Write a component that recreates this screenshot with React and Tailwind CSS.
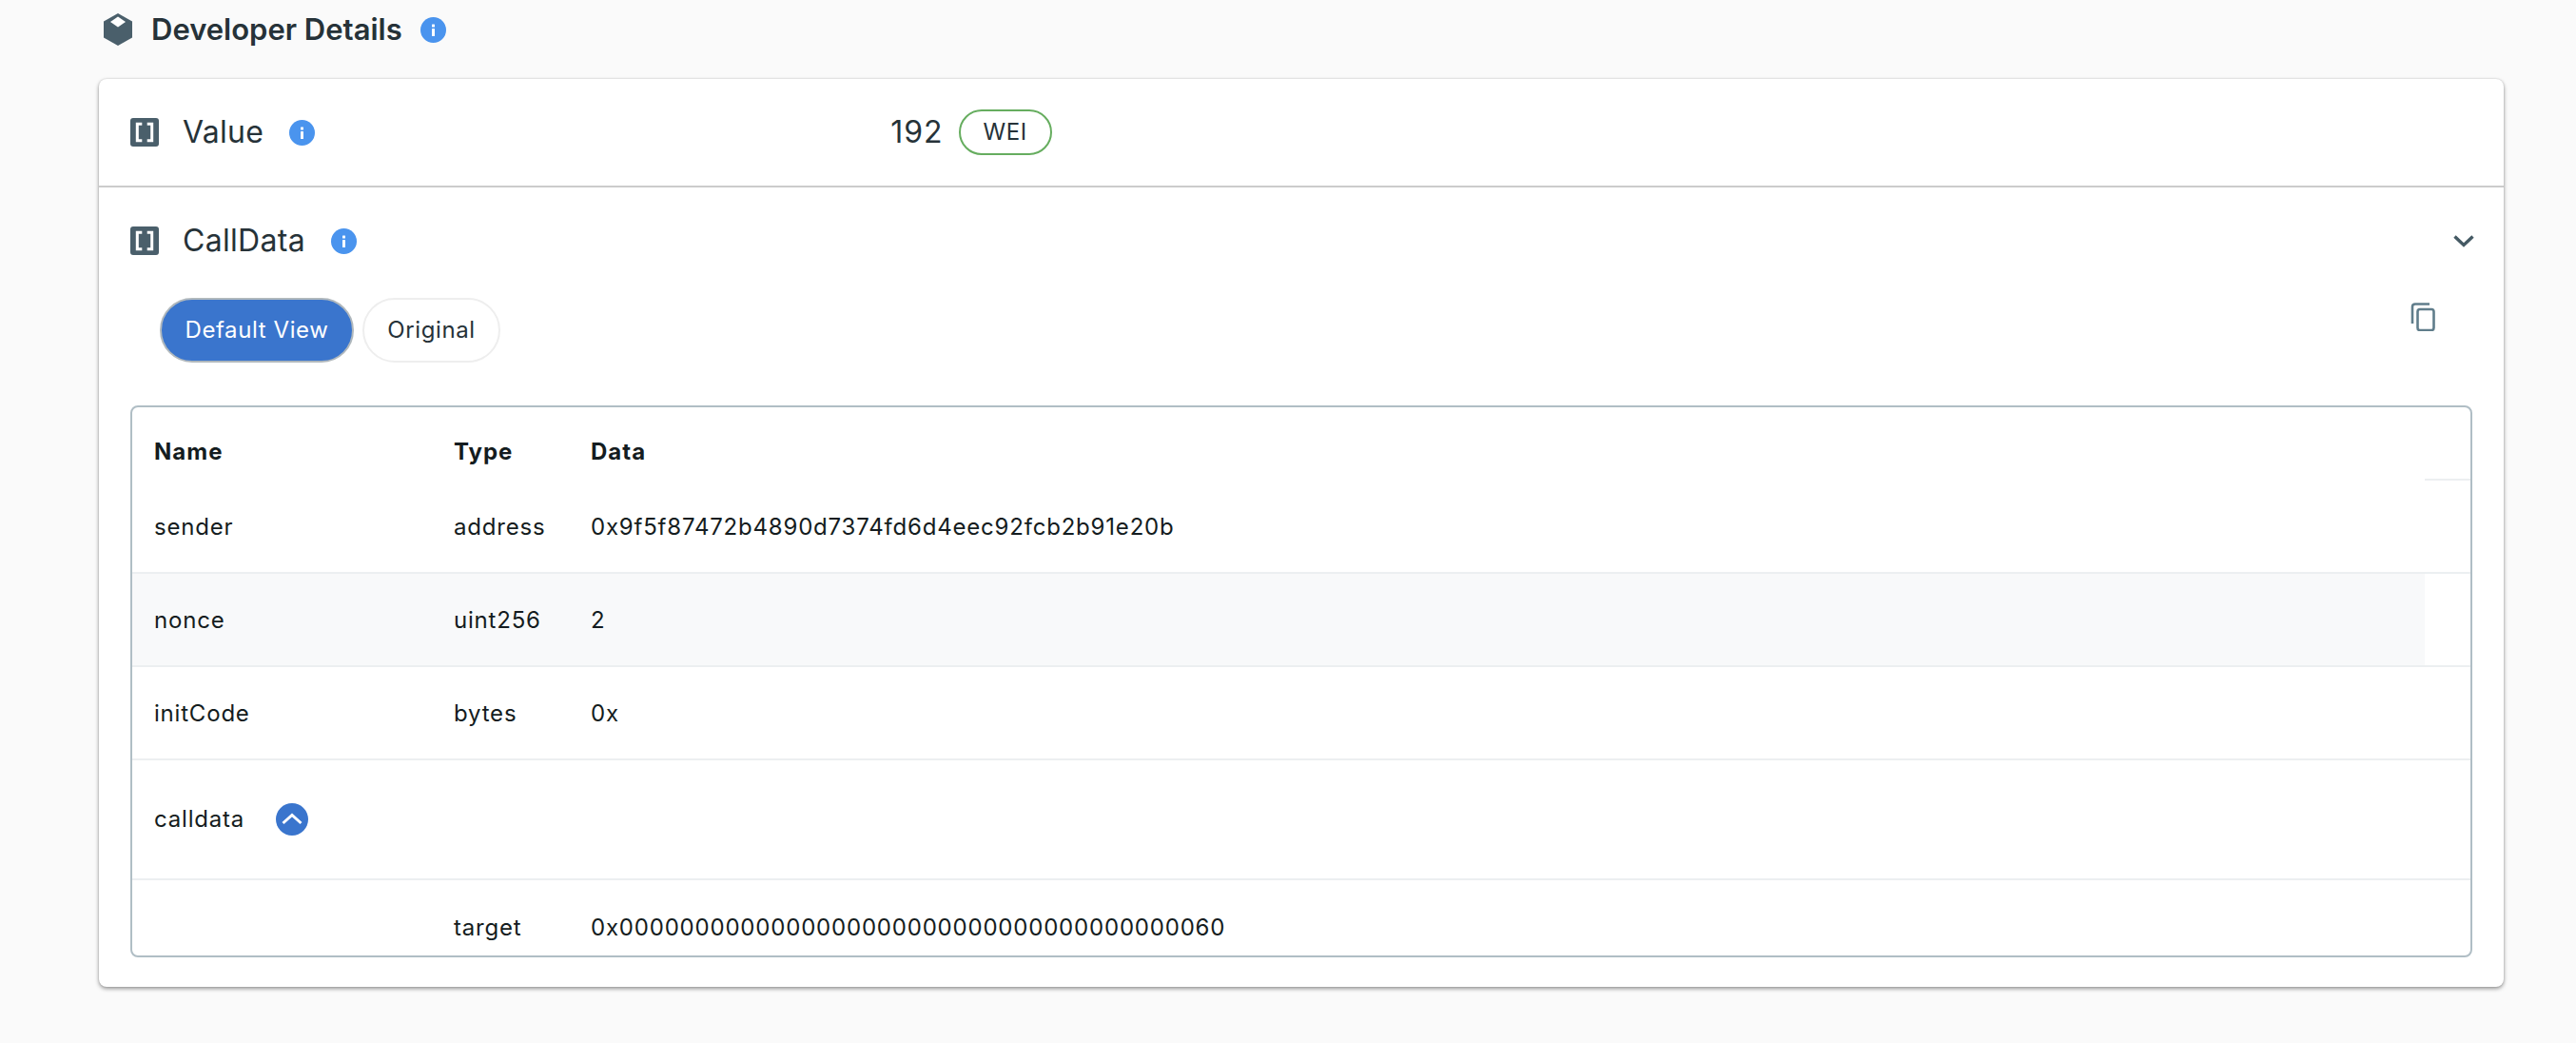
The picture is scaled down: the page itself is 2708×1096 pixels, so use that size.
const font = { fontFamily: 'Inter, "Noto Sans", sans-serif' }

function InfoDot() {
  return (
    <svg width="27" height="27" viewBox="0 0 27 27" className="shrink-0">
      <circle cx="13.5" cy="13.5" r="13.5" fill="#4a94ee" />
      <rect x="12" y="12" width="3" height="8" rx="0.5" fill="#fff" />
      <rect x="12" y="7.5" width="3" height="3" rx="0.5" fill="#fff" />
    </svg>
  )
}

function BracketIcon() {
  return (
    <svg width="30" height="30" viewBox="0 0 30 30" className="shrink-0">
      <rect width="30" height="30" rx="3" fill="#4a5f6b" />
      <path d="M12.300 6.200H7.300v17.600h5M17.700 6.200h5v17.600h-5" fill="none" stroke="#fff" strokeWidth="3" />
    </svg>
  )
}

function CubeIcon() {
  return (
    <svg width="30" height="34" viewBox="0 0 30 34" className="shrink-0">
      <path d="M15 0 30 8.5v17L15 34 0 25.5v-17Z" fill="#4a5f6b" />
      <path d="M15 3.500 23 9 15 14.500 7 9Z" fill="#fff" />
    </svg>
  )
}

function Row({ name, type, data, shaded, last }) {
  return (
    <div className={`${last ? '' : 'border-b-2 border-[#eceff1]'} h-[98px] pr-[48px]`}>
      <div className={`grid h-full grid-cols-[315px_144px_1fr] items-center pt-[2px] pl-[23px] text-[24px] tracking-[0.8px] text-[#141c20] ${shaded ? 'bg-[#f8f9fa]' : ''}`}>
        <span>{name}</span>
        <span>{type}</span>
        <span>{data}</span>
      </div>
    </div>
  )
}

export default function App() {
  return (
    <div className="h-[1096px] w-[2708px] overflow-hidden bg-[#fafafa] pr-[76px] pl-[104px]" style={font}>
      <div className="flex h-[83px] items-start">
        <div className="mt-[8px] flex items-center">
          <span className="mr-[20px] ml-[5px]"><CubeIcon /></span>
          <h2 className="mr-[19px] text-[31px] font-semibold text-[#263238]">Developer Details</h2>
          <InfoDot />
        </div>
      </div>

      <div className="h-[954px] rounded-[8px] bg-white shadow-[0_2px_4px_rgba(0,0,0,0.4),0_0_2px_rgba(0,0,0,0.15)]">
        <div className="flex h-[114px] items-center border-b-2 border-[#cccccc] pl-[33px]">
          <BracketIcon />
          <span className="ml-[25px] text-[32px] tracking-[0.3px] text-[#263238]">Value</span>
          <span className="ml-[27px]"><InfoDot /></span>
          <span className="ml-[605px] text-[32px] tracking-[1px] text-[#263238]">192</span>
          <span className="ml-[16px] flex h-[48px] w-[98px] items-center justify-center rounded-full border-2 border-[#66ad5f] text-[24px] tracking-[0.5px] text-[#263238]">WEI</span>
        </div>

        <div className="flex h-[112px] items-center pr-[31px] pl-[33px]">
          <BracketIcon />
          <span className="ml-[25px] text-[32px] tracking-[0.3px] text-[#263238]">CallData</span>
          <span className="ml-[27px]"><InfoDot /></span>
          <svg width="22" height="14" viewBox="0 0 22 14" className="ml-auto">
            <path d="M1.500 2.500 11 11.500 20.500 2.500" fill="none" stroke="#455a64" strokeWidth="3.400" />
          </svg>
        </div>

        <div className="mt-[4px] flex items-start pr-[72px] pl-[64px]">
          <div className="flex gap-[9px]">
            <button className="h-[68px] w-[204px] rounded-full border-2 border-[#b0b8bd] bg-[#3a75cd] text-[24px] tracking-[0.6px] text-white">Default View</button>
            <button className="h-[68px] w-[145px] rounded-full border-2 border-[#eeeeee] bg-white text-[24px] tracking-[0.6px] text-[#263238]">Original</button>
          </div>
          <svg width="26" height="30" viewBox="0 0 26 30" className="mt-[5px] ml-auto">
            <path d="M20 1.500H5Q2 1.500 2 4.500V22" fill="none" stroke="#607d8b" strokeWidth="2.600" />
            <rect x="7.500" y="7" width="17" height="22" rx="2.500" fill="none" stroke="#607d8b" strokeWidth="2.600" />
          </svg>
        </div>

        <div className="mx-[33px] mt-[45px] h-[580px] overflow-hidden rounded-[8px] border-2 border-[#b0bec5]">
          <div className="flex h-[77px]">
            <div className="grid flex-1 grid-cols-[315px_144px_1fr] items-center pt-[17px] pl-[23px] text-[24px] font-bold tracking-[1px] text-[#141c20]">
              <span>Name</span>
              <span>Type</span>
              <span>Data</span>
            </div>
            <div className="w-[48px] border-b-2 border-[#eceff1]" />
          </div>
          <Row name="sender" type="address" data="0x9f5f87472b4890d7374fd6d4eec92fcb2b91e20b" />
          <Row name="nonce" type="uint256" data="2" shaded />
          <Row name="initCode" type="bytes" data="0x" />
          <div className="flex h-[126px] items-center border-b-2 border-[#eceff1] pl-[23px] text-[24px] tracking-[0.8px] text-[#141c20]">
            <span>calldata</span>
            <svg width="34" height="34" viewBox="0 0 34 34" className="ml-[33px]">
              <circle cx="17" cy="17" r="17" fill="#3a75cd" />
              <path d="M7.500 21 17 12.500 26.500 21" fill="none" stroke="#fff" strokeWidth="3" />
            </svg>
          </div>
          <Row name="" type="target" data="0x0000000000000000000000000000000000000060" last />
        </div>
      </div>
    </div>
  )
}
